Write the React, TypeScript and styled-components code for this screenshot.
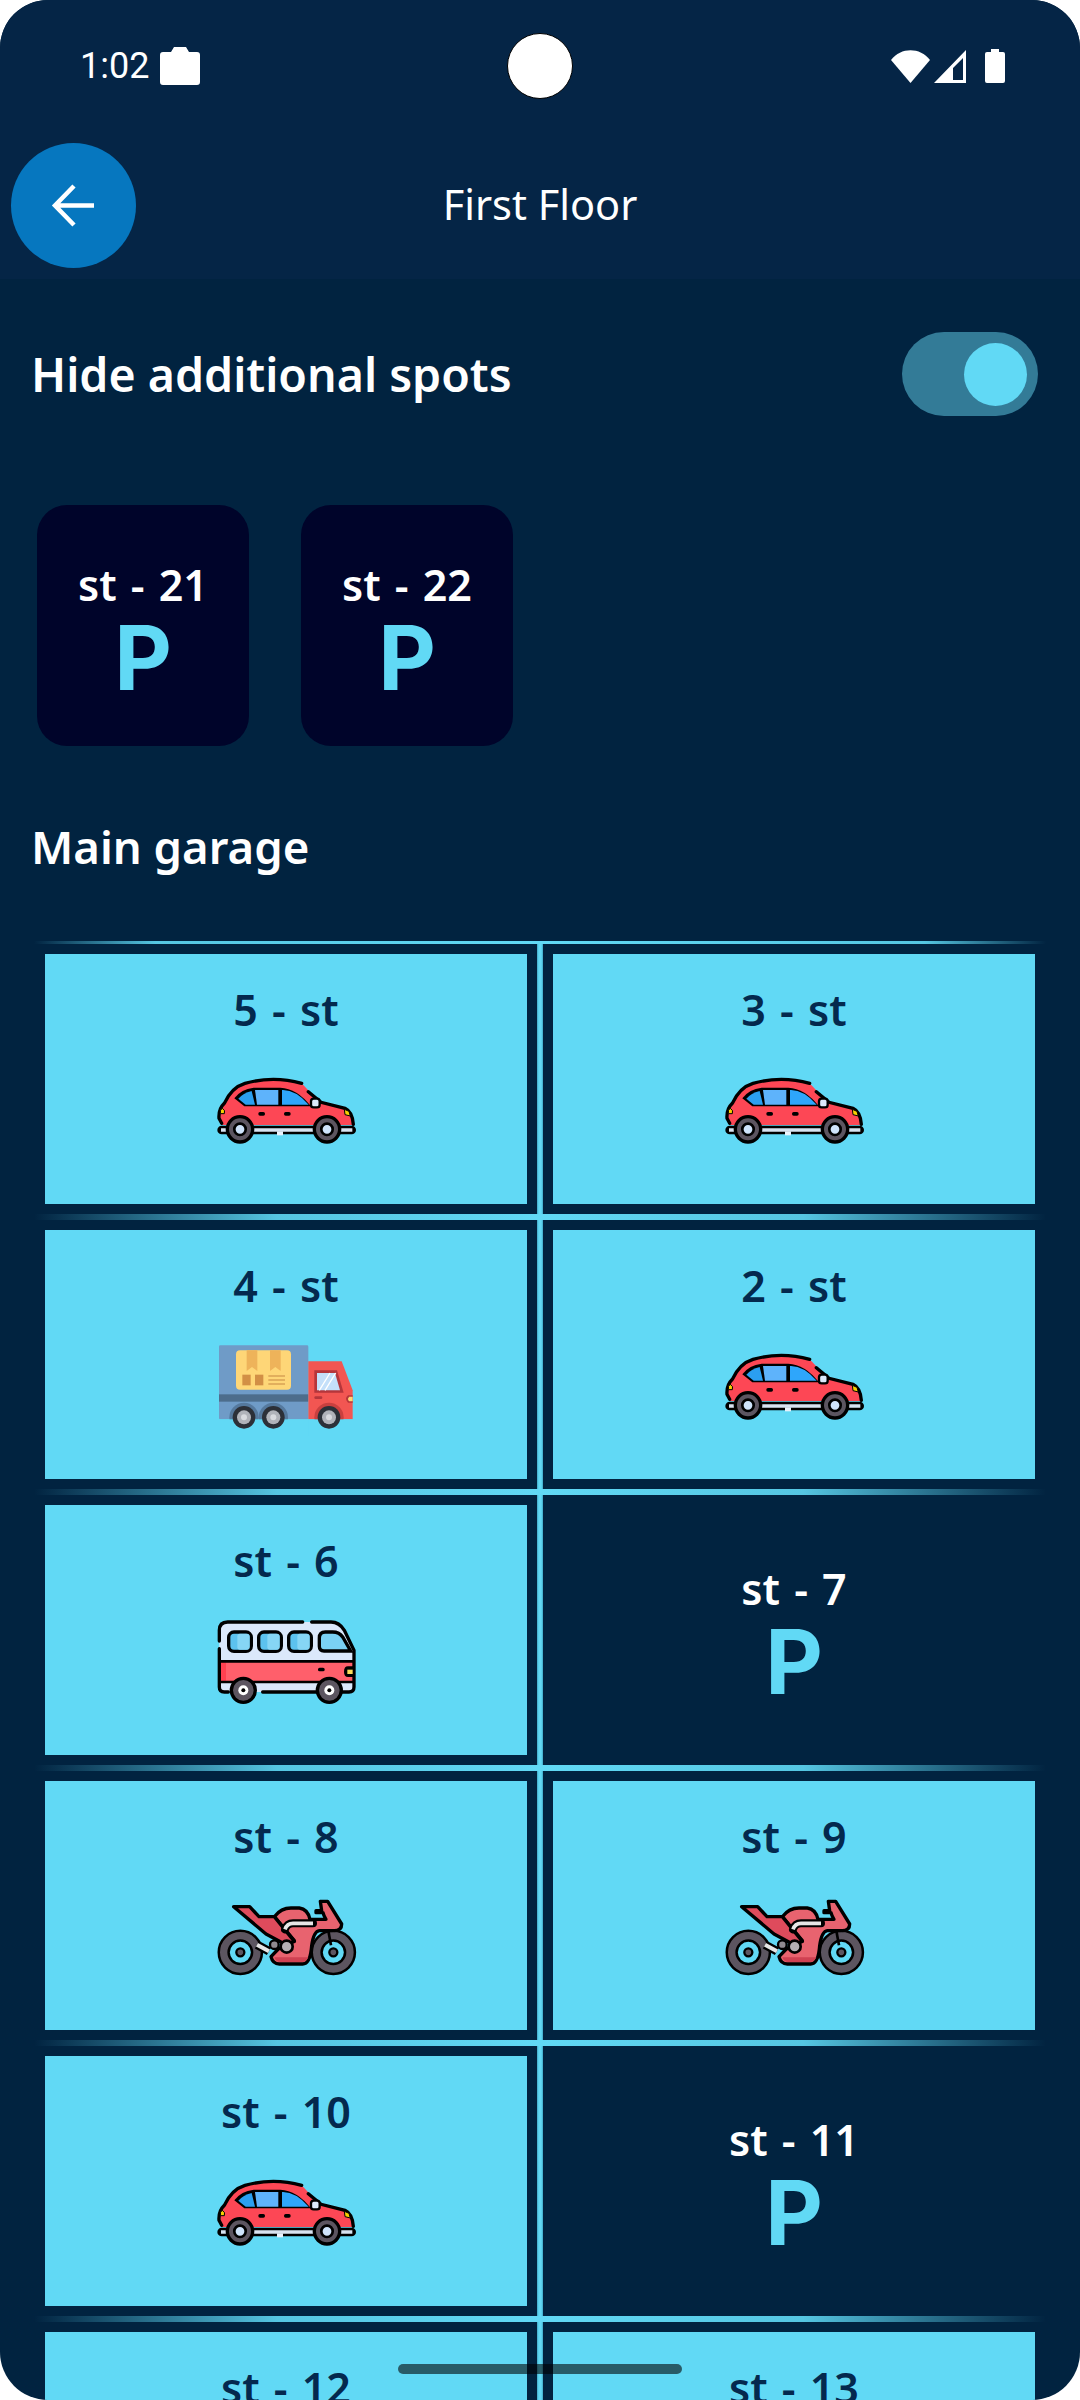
import React from 'react'
import styled, { createGlobalStyle } from 'styled-components'

const GlobalStyle = createGlobalStyle`
  html, body {
    margin: 0;
    padding: 0;
    background: #fff;
  }
`

const Screen = styled.div`
  position: relative;
  width: 1080px;
  height: 2400px;
  overflow: hidden;
  border-radius: 48px;
  background: #012340;
  font-family: "Noto Sans", "Open Sans", sans-serif;
`

const TopBar = styled.header`
  height: 279px;
  background: #052546;
`

const StatusBar = styled.div`
  height: 132px;
  padding: 0 75px 0 80px;
  box-sizing: border-box;
  display: flex;
  align-items: center;
  justify-content: space-between;
  color: #fff;
  font-family: Roboto, sans-serif;
  font-size: 36px;
`

const StatusGroup = styled.div`
  display: flex;
  align-items: center;
  gap: 11px;
`

const SignalGroup = styled.div`
  display: flex;
  align-items: center;
  gap: 4px;
`

const BatterySvg = styled.svg`
  margin-left: 15px;
`

const Camera = styled.div`
  position: absolute;
  left: 507px;
  top: 33px;
  width: 66px;
  height: 66px;
  box-sizing: border-box;
  border-radius: 50%;
  background: #fff;
  border: 1px solid #000;
`

const Header = styled.div`
  margin-top: 11px;
  padding-left: 11px;
  display: grid;
  grid-template-columns: 125px 1fr 136px;
  align-items: center;
`

const BackButton = styled.button`
  width: 125px;
  height: 125px;
  padding: 0;
  border: 0;
  border-radius: 50%;
  background: #0677bf;
  display: flex;
  align-items: center;
  justify-content: center;
`

const Title = styled.h1`
  margin: 0;
  padding-bottom: 3px;
  text-align: center;
  color: #fff;
  font-size: 41.5px;
  font-weight: 400;
`

const ToggleRow = styled.div`
  margin-top: 53px;
  padding: 0 42px 0 31px;
  display: flex;
  align-items: center;
  justify-content: space-between;
`

const SectionTitle = styled.h2`
  margin: 0;
  color: #fff;
  font-size: 46.5px;
  line-height: 60px;
  font-weight: 600;
`

const ToggleTrack = styled.div`
  width: 136px;
  height: 84px;
  padding: 0 11px;
  box-sizing: border-box;
  border-radius: 42px;
  background: #337b97;
  display: flex;
  align-items: center;
  justify-content: flex-end;
`

const ToggleThumb = styled.div`
  width: 63px;
  height: 63px;
  border-radius: 50%;
  background: #61d9f5;
`

const SpotRow = styled.div`
  margin-top: 89px;
  padding-left: 37px;
  display: flex;
  gap: 52px;
`

const SpotCard = styled.div`
  width: 212px;
  height: 241px;
  padding-top: 17px;
  box-sizing: border-box;
  border-radius: 30px;
  background: #00042a;
  display: flex;
  flex-direction: column;
  align-items: center;
  justify-content: center;
`

const SpotLabel = styled.div<{ $dark?: boolean }>`
  color: ${({ $dark }) => ($dark ? '#04294e' : '#fff')};
  font-size: 43px;
  line-height: 48px;
  word-spacing: 3px;
  font-weight: 600;
`

const SpotMark = styled.div`
  color: #61d9f5;
  font-family: Inter, "Noto Sans", sans-serif;
  font-size: 89px;
  line-height: 98px;
  font-weight: 700;
`

const MainTitle = styled(SectionTitle)`
  margin-top: 70px;
  padding-left: 31px;
  font-size: 45.5px;
`

const Garage = styled.section`
  margin-top: 65px;
  padding: 0 45px;
`

const HLine = styled.div<{ $thin?: boolean }>`
  height: ${({ $thin }) => ($thin ? 3 : 6)}px;
  margin: 0 -11px;
  background: linear-gradient(
    90deg,
    rgba(97, 217, 245, 0),
    #55c6e2 ${({ $thin }) => ($thin ? 12 : 24)}%,
    #61d9f5 50%,
    #55c6e2 ${({ $thin }) => ($thin ? 88 : 76)}%,
    rgba(97, 217, 245, 0)
  );
`

const Row = styled.div`
  display: grid;
  grid-template-columns: 482px 26px 482px;
`

const Gutter = styled.div`
  display: flex;
  justify-content: center;
`

const VLine = styled.div`
  width: 6px;
  background: linear-gradient(90deg, #3fa8c6, #61d9f5 30%, #61d9f5 70%, #3fa8c6);
`

const Cell = styled.div`
  padding: 10px 0;
`

const Slot = styled.div<{ $taken?: boolean }>`
  height: 249.5px;
  box-sizing: border-box;
  padding-top: ${({ $taken }) => ($taken ? 32 : 17)}px;
  background: ${({ $taken }) => ($taken ? '#61d9f5' : 'transparent')};
  display: flex;
  flex-direction: column;
  align-items: center;
  justify-content: ${({ $taken }) => ($taken ? 'flex-start' : 'center')};
`

const VehicleBox = styled.svg`
  margin-top: 17px;
  width: 190px;
  height: 120px;
  flex: none;
`

const HomeBar = styled.div`
  position: absolute;
  left: 398px;
  top: 2364px;
  width: 284px;
  height: 10px;
  border-radius: 5px;
  background: rgba(0, 0, 0, 0.58);
`

const Briefcase = () => (
  <svg width="40" height="40" viewBox="0 0 40 40" fill="#fff">
    <path d="M3 6h8l3-5h12l3 5h8q3 0 3 3v27q0 3-3 3H3q-3 0-3-3V9q0-3 3-3z" />
  </svg>
)

const Wifi = () => (
  <svg width="39" height="33" viewBox="0 0 39 33" fill="#fff">
    <path d="M0 10C10-3 29-3 39 10L19.500 33z" />
  </svg>
)

const Signal = () => (
  <svg width="32" height="33" viewBox="0 0 32 33">
    <path fillRule="evenodd" fill="#fff" d="M32 0V33H0zM29 8L19 18V30H29z" />
  </svg>
)

const Battery = () => (
  <BatterySvg width="20" height="34" viewBox="0 0 20 34" fill="#fff">
    <path d="M6 0h8v3h4q2 0 2 2v27q0 2-2 2H2q-2 0-2-2V5q0-2 2-2h4z" />
  </BatterySvg>
)

const ArrowBack = () => (
  <svg width="45" height="45" viewBox="0 0 45 45" fill="none" stroke="#fff" strokeWidth="4.500">
    <path d="M43 22.500H5M23 3L4 22.500 23 42" />
  </svg>
)

const Wheel = ({ x, y, r, hub }: { x: number; y: number; r: number; hub: string }) => (
  <g>
    <circle cx={x} cy={y} r={r} fill="#5c5560" stroke="#000" strokeWidth="10" />
    <circle cx={x} cy={y} r={r * 0.45} fill={hub} stroke="#000" strokeWidth="8" />
  </g>
)

const Car = () => (
  <VehicleBox viewBox="0 33 570 360">
    <path d="M92 270h390" stroke="#000" strokeWidth="26" strokeLinecap="round" />
    <path d="M90 270h394" stroke="#d7e3f1" strokeWidth="10" />
    <path d="M258 280h18" stroke="#e8f2fc" strokeWidth="12" />
    <path d="M92 255l-8-20q-2-28 16-45q22-48 62-60q85-24 170 0l52 55l76 20q24 10 27 50z" fill="#fd4755" />
    <path d="M92 250l-8-15q-2-28 16-45q22-48 62-60q85-24 170 0M352 155l38 32l72 18q22 10 25 48" fill="none" stroke="#000" strokeWidth="10" strokeLinecap="round" />
    <path d="M130 175q20-28 58-32h80q50 2 92 56H160z" fill="#000" />
    <path d="M142 176q14-16 40-23l10 41h-28z" fill="#2b9ff0" />
    <path d="M192 150h70v44h-64z" fill="#5eb3fb" />
    <path d="M273 150q40-2 80 44h-80z" fill="#2ea6fb" />
    <rect x="360" y="176" width="26" height="26" rx="8" fill="#dbe9fb" stroke="#000" strokeWidth="7" />
    <path d="M94 205q-8 4-6 16h12q4-10-6-16zM460 208l14 6 4 14-16-4z" fill="#f8d200" stroke="#000" strokeWidth="3" />
    <rect x="202" y="216" width="20" height="11" rx="5" fill="#000" />
    <rect x="279" y="216" width="20" height="11" rx="5" fill="#000" />
    <Wheel x={147} y={268} r={38} hub="#cfe4fb" />
    <Wheel x={408} y={268} r={38} hub="#cfe4fb" />
  </VehicleBox>
)

const Truck = () => (
  <VehicleBox viewBox="3 20 570 360">
    <rect x="87" y="75" width="268" height="222" rx="4" fill="#6f9bc7" />
    <rect x="87" y="222" width="268" height="22" fill="#4d6d8c" />
    <rect x="138" y="90" width="165" height="118" rx="12" fill="#fed677" />
    <path d="M170 90h32v62l-16-12-16 12zM240 90h32v62l-16-12-16 12z" fill="#eeb35a" />
    <rect x="157" y="163" width="25" height="32" fill="#d28f45" />
    <rect x="195" y="163" width="25" height="32" fill="#d28f45" />
    <path d="M235 167h50M235 179h50M235 191h50" stroke="#d9a355" strokeWidth="5" />
    <path d="M355 123h100l33 87v87h-133z" fill="#f25652" />
    <path d="M373 150h68l20 67h-88z" fill="#b5363b" />
    <path d="M381 158h54l15 52h-69z" fill="#c4e0fa" />
    <path d="M388 210l32-52M405 210l32-52" stroke="#fff" strokeWidth="4" />
    <rect x="373" y="228" width="24" height="8" rx="4" fill="#b5363b" />
    <path d="M488 225h-14q-12 10 0 22h14z" fill="#b5363b" />
    <path d="M488 229h-10q-8 7 0 14h10z" fill="#fed677" />
    <circle cx="162" cy="291" r="44" fill="#55799e" />
    <circle cx="250" cy="291" r="44" fill="#55799e" />
    <circle cx="417" cy="291" r="44" fill="#c9403f" />
    <rect x="87" y="297" width="268" height="50" fill="#61d9f5" />
    <rect x="355" y="297" width="133" height="50" fill="#61d9f5" />
    {[162, 250, 417].map((x) => (
      <g key={x}>
        <circle cx={x} cy="291" r="34" fill="#2c3038" />
        <circle cx={x} cy="291" r="21" fill="#b0b3ba" />
        <circle cx={x} cy="291" r="9" fill="#d8dadf" />
      </g>
    ))}
  </VehicleBox>
)

const BusWindow = ({ x }: { x: number }) => (
  <g>
    <rect x={x} y="95" width="68" height="58" rx="16" fill="#5cc2ee" stroke="#000" strokeWidth="10" />
    <rect x={x + 26} y="100" width="37" height="48" rx="8" fill="#86d6f5" />
  </g>
)

const Bus = () => (
  <VehicleBox viewBox="0 5 570 360">
    <path d="M85 90q0-25 25-25h310q25 0 40 25l29 60v110q0 15-15 15H100q-15 0-15-15z" fill="#dbe8fb" />
    <rect x="85" y="183" width="404" height="62" fill="#ff5f6b" />
    <rect x="85" y="183" width="20" height="62" fill="#ff4050" />
    <path d="M85 122V90q0-25 25-25h225M362 65h58q25 0 40 25l29 60v110q0 15-15 15H215M85 145v115q0 15 15 15h12" fill="none" stroke="#000" strokeWidth="10" strokeLinecap="round" />
    <path d="M85 183h404M85 245h404" stroke="#000" strokeWidth="8" />
    <BusWindow x={113} />
    <BusWindow x={203} />
    <BusWindow x={293} />
    <path d="M385 113q0-18 18-18h22q20 0 30 15l24 42h-80q-14 0-14-14z" fill="#7ad1f4" stroke="#000" strokeWidth="10" />
    <rect x="381" y="202" width="20" height="11" rx="5" fill="#000" />
    <path d="M489 198h-18q-12 0-12 16t12 16h18z" fill="#000" />
    <rect x="469" y="208" width="16" height="13" fill="#f9dc5c" />
    <circle cx="157" cy="270" r="36" fill="#5c5560" stroke="#000" strokeWidth="10" />
    <circle cx="157" cy="270" r="15" fill="#fff" />
    <circle cx="157" cy="270" r="6" fill="#000" />
    <circle cx="415" cy="270" r="36" fill="#5c5560" stroke="#000" strokeWidth="10" />
    <circle cx="415" cy="270" r="15" fill="#fff" />
    <circle cx="415" cy="270" r="6" fill="#000" />
  </VehicleBox>
)

const BikeWheel = ({ x }: { x: number }) => (
  <g>
    <circle cx={x} cy="215" r="50" fill="none" stroke="#000" strokeWidth="37" />
    <circle cx={x} cy="215" r="50" fill="none" stroke="#5c5560" strokeWidth="22" />
    <circle cx={x} cy="215" r="12" fill="#5c5560" stroke="#000" strokeWidth="7" />
  </g>
)

const Bike = () => (
  <VehicleBox viewBox="0 -8 570 360">
    <BikeWheel x={148} />
    <BikeWheel x={427} />
    <path d="M250 108q20-26 50-26h25q25 3 32 34h48q-7-11-9-20h-21v-6h17l-4-28h22l42 68q0 20-22 20h-45q-17 2-23 45q-4 55-27 55h-70q-20 0-25-22l22-23 48-25z" fill="#e8636f" stroke="#000" strokeWidth="10" strokeLinejoin="round" />
    <path d="M128 78h48l28 30h46l60 74-25 10-60-32z" fill="#de4b5c" stroke="#000" strokeWidth="10" strokeLinejoin="round" />
    <path d="M250 230q4 14 18 14h66q12 0 18-14z" fill="#cf4152" />
    <path d="M198 192l36 20" stroke="#000" strokeWidth="26" />
    <path d="M198 192l36 20" stroke="#e6e6e6" strokeWidth="12" />
    <path d="M282 146q6-18 24-18h60" fill="none" stroke="#000" strokeWidth="24" strokeLinecap="round" />
    <path d="M282 146q6-18 24-18h60" fill="none" stroke="#e6e6e6" strokeWidth="11" />
    <circle cx="250" cy="192" r="13" fill="#8f8a90" stroke="#000" strokeWidth="7" />
    <circle cx="287" cy="198" r="18" fill="#b4b0b4" stroke="#000" strokeWidth="8" />
    <path d="M412 150l8 44" stroke="#000" strokeWidth="8" />
  </VehicleBox>
)

const vehicles = { car: Car, truck: Truck, bus: Bus, bike: Bike }

type Spot = { label: string; vehicle?: keyof typeof vehicles }

const rows: Spot[][] = [
  [{ label: '5 - st', vehicle: 'car' }, { label: '3 - st', vehicle: 'car' }],
  [{ label: '4 - st', vehicle: 'truck' }, { label: '2 - st', vehicle: 'car' }],
  [{ label: 'st - 6', vehicle: 'bus' }, { label: 'st - 7' }],
  [{ label: 'st - 8', vehicle: 'bike' }, { label: 'st - 9', vehicle: 'bike' }],
  [{ label: 'st - 10', vehicle: 'car' }, { label: 'st - 11' }],
  [{ label: 'st - 12', vehicle: 'car' }, { label: 'st - 13', vehicle: 'car' }],
]

const GarageSlot = ({ spot }: { spot: Spot }) => {
  const Vehicle = spot.vehicle ? vehicles[spot.vehicle] : null
  return (
    <Cell>
      <Slot $taken={!!Vehicle}>
        <SpotLabel $dark={!!Vehicle}>{spot.label}</SpotLabel>
        {Vehicle ? <Vehicle /> : <SpotMark>P</SpotMark>}
      </Slot>
    </Cell>
  )
}

const App = () => (
  <>
    <GlobalStyle />
    <Screen>
      <TopBar>
        <StatusBar>
          <StatusGroup>
            1:02
            <Briefcase />
          </StatusGroup>
          <SignalGroup>
            <Wifi />
            <Signal />
            <Battery />
          </SignalGroup>
        </StatusBar>
        <Header>
          <BackButton>
            <ArrowBack />
          </BackButton>
          <Title>First Floor</Title>
        </Header>
      </TopBar>
      <Camera />
      <ToggleRow>
        <SectionTitle>Hide additional spots</SectionTitle>
        <ToggleTrack>
          <ToggleThumb />
        </ToggleTrack>
      </ToggleRow>
      <SpotRow>
        <SpotCard>
          <SpotLabel>st - 21</SpotLabel>
          <SpotMark>P</SpotMark>
        </SpotCard>
        <SpotCard>
          <SpotLabel>st - 22</SpotLabel>
          <SpotMark>P</SpotMark>
        </SpotCard>
      </SpotRow>
      <MainTitle>Main garage</MainTitle>
      <Garage>
        {rows.map((row, i) => (
          <React.Fragment key={row[0].label}>
            <HLine $thin={i === 0} />
            <Row>
              <GarageSlot spot={row[0]} />
              <Gutter>
                <VLine />
              </Gutter>
              <GarageSlot spot={row[1]} />
            </Row>
          </React.Fragment>
        ))}
      </Garage>
      <HomeBar />
    </Screen>
  </>
)

export default App
